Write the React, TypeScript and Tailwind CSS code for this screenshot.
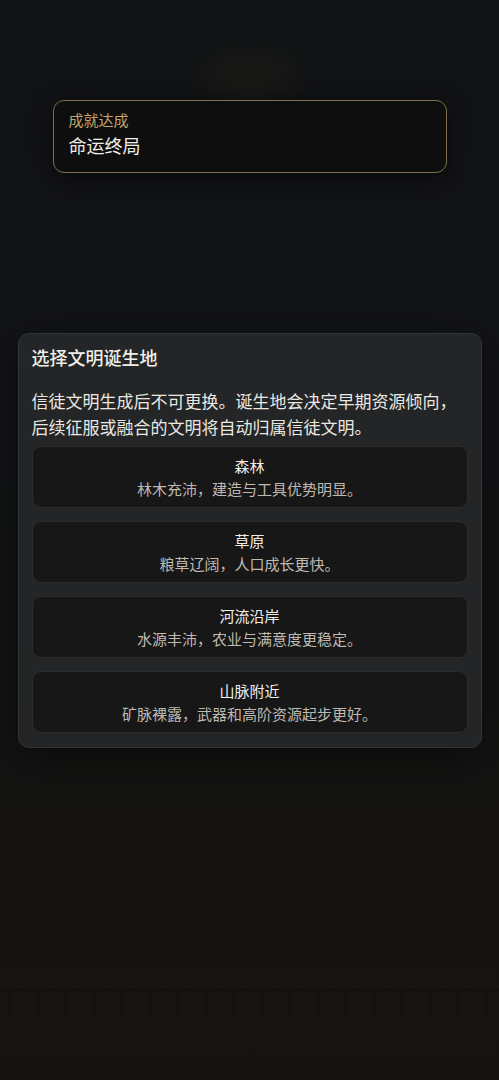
import React from "react";

const options = [
  { name: "森林", desc: "林木充沛，建造与工具优势明显。" },
  { name: "草原", desc: "粮草辽阔，人口成长更快。" },
  { name: "河流沿岸", desc: "水源丰沛，农业与满意度更稳定。" },
  { name: "山脉附近", desc: "矿脉裸露，武器和高阶资源起步更好。" },
];

function Pillars() {
  const posts = Array.from({ length: 18 }, (_, i) => 10 + i * 28);
  return (
    <svg width="499" height="40" viewBox="0 0 499 40" className="block opacity-30">
      <line x1="0" y1="8" x2="499" y2="8" stroke="#0c0b09" strokeWidth="2" />
      {posts.map((x) => (
        <g key={x}>
          <path d={`M${x} 36 L${x} 12 Q${x + 14} 2 ${x + 28} 12`} stroke="#0d0c0a" strokeWidth="2" fill="none" />
        </g>
      ))}
    </svg>
  );
}

export default function App() {
  return (
    <div
      className="relative w-[499px] h-[1080px] overflow-hidden bg-[linear-gradient(180deg,#111315_0%,#131416_45%,#151412_75%,#171410_100%)]"
      style={{ fontFamily: '"Noto Sans CJK SC", "Noto Sans", sans-serif' }}
    >
      {/* faint glow */}
      <div className="absolute left-[205px] top-[55px] w-[90px] h-[40px] rounded-full bg-[#3a3418] opacity-20 blur-[14px]" />

      <div className="relative flex flex-col items-center pt-[100px]">
        {/* toast */}
        <div className="w-[394px] h-[73px] rounded-[11px] border border-[#7d6f4e] bg-[#0e0e0e] shadow-[0_6px_24px_rgba(0,0,0,0.6)] pl-[15px] pt-[8px] flex flex-col">
          <div className="text-[15px] leading-[22px] text-[#c2a46c]">成就达成</div>
          <div className="text-[18px] leading-[26px] text-[#f2efe8] mt-[1px]">命运终局</div>
        </div>

        {/* modal */}
        <div className="mt-[160px] w-[464px] rounded-[11px] border border-[#313436] bg-[#232526] px-[13px] pt-[12px] pb-[14px] shadow-[0_10px_40px_rgba(0,0,0,0.5)]">
          <div className="text-[18px] leading-[22px] font-medium text-[#f1eee8]">选择文明诞生地</div>
          <div className="mt-[20px] text-[17px] leading-[26px] text-[#ebe8e2]">
            信徒文明生成后不可更换。诞生地会决定早期资源倾向，后续征服或融合的文明将自动归属信徒文明。
          </div>
          <div className="mt-[6px] flex flex-col gap-[13px]">
            {options.map((o) => (
              <div
                key={o.name}
                className="rounded-[9px] border border-[#2a2c2e] bg-[#171718] py-[7px] flex flex-col items-center"
              >
                <div className="text-[15px] leading-[23px] text-[#f1eee8]">{o.name}</div>
                <div className="text-[15px] leading-[23px] text-[#bfbab1]">{o.desc}</div>
              </div>
            ))}
          </div>
        </div>
      </div>

      <div className="absolute left-0 top-[982px]">
        <Pillars />
      </div>
    </div>
  );
}
